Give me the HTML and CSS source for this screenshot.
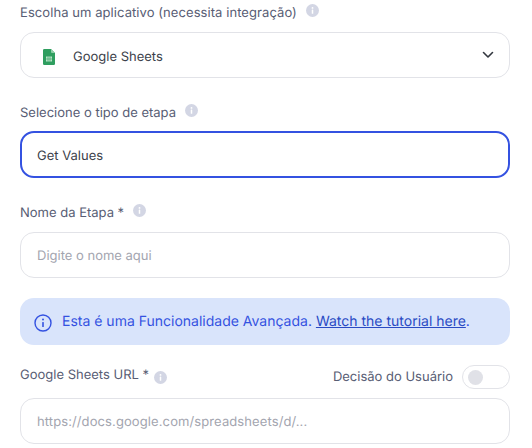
FILE: index.html
```html
<!DOCTYPE html>
<html lang="pt">
<head>
<meta charset="utf-8">
<title>Etapa</title>
<link rel="stylesheet" href="styles.css">
</head>
<body>
<main class="form">
  <section class="field field-app">
    <div class="label-row">
      <label class="label label-long">Escolha um aplicativo (necessita integração)</label>
      <svg class="hint hint-up" viewBox="0 0 14 14"><circle cx="7" cy="7" r="7" fill="#d3d6e4"/><rect x="6.2" y="6" width="1.6" height="4.6" rx=".5" fill="#fff"/><circle cx="7" cy="4.2" r="1" fill="#fff"/></svg>
    </div>
    <div class="box select">
      <svg class="sheets" viewBox="0 0 12 16"><path d="M1.2 0H8l4 4v10.8A1.2 1.2 0 0 1 10.800 16H1.200A1.200 1.200 0 0 1 0 14.800V1.200A1.200 1.200 0 0 1 1.200 0z" fill="#2f9e5f"/><path d="M8 0l4 4H9a1 1 0 0 1-1-1z" fill="#8fcfa8"/><path d="M3 7.500h6v5H3z" fill="#b9e2c8"/><path d="M5 7.500v5M7 7.500v5M3 10h6" stroke="#2f9e5f" stroke-width=".6"/></svg>
      <span class="value value-app">Google Sheets</span>
      <svg class="chevron" viewBox="0 0 12 8"><path d="M1.500 1.500L6 6l4.500-4.500" fill="none" stroke="#33373f" stroke-width="1.600" stroke-linecap="round" stroke-linejoin="round"/></svg>
    </div>
  </section>

  <section class="field field-type">
    <div class="label-row">
      <label class="label">Selecione o tipo de etapa</label>
      <svg class="hint hint-up" viewBox="0 0 14 14"><circle cx="7" cy="7" r="7" fill="#d3d6e4"/><rect x="6.2" y="6" width="1.6" height="4.6" rx=".5" fill="#fff"/><circle cx="7" cy="4.2" r="1" fill="#fff"/></svg>
    </div>
    <div class="box box-focus"><span class="value">Get Values</span></div>
  </section>

  <section class="field field-name">
    <div class="label-row">
      <label class="label">Nome da Etapa *</label>
      <svg class="hint hint-up" viewBox="0 0 14 14"><circle cx="7" cy="7" r="7" fill="#d3d6e4"/><rect x="6.2" y="6" width="1.6" height="4.6" rx=".5" fill="#fff"/><circle cx="7" cy="4.2" r="1" fill="#fff"/></svg>
    </div>
    <div class="box"><span class="placeholder">Digite o nome aqui</span></div>
  </section>

  <aside class="banner">
    <svg class="banner-icon" viewBox="0 0 18 18"><circle cx="9" cy="9" r="8" fill="none" stroke="#3452e1" stroke-width="1.400"/><rect x="8.200" y="8" width="1.600" height="5" rx=".6" fill="#3452e1"/><circle cx="9" cy="5.600" r="1" fill="#3452e1"/></svg>
    <p class="banner-text">Esta é uma Funcionalidade Avançada. <a class="banner-link" href="#">Watch the tutorial here</a>.</p>
  </aside>

  <section class="field field-url">
    <div class="label-row url-row">
      <label class="label">Google Sheets URL *</label>
      <svg class="hint hint-down" viewBox="0 0 14 14"><circle cx="7" cy="7" r="7" fill="#d3d6e4"/><rect x="6.2" y="6" width="1.6" height="4.6" rx=".5" fill="#fff"/><circle cx="7" cy="4.2" r="1" fill="#fff"/></svg>
      <span class="toggle-label">Decisão do Usuário</span>
      <span class="toggle"><span class="knob"></span></span>
    </div>
    <div class="box"><span class="placeholder placeholder-url">https://docs.google.com/spreadsheets/d/...</span></div>
  </section>
</main>
</body>
</html>
```
FILE: styles.css
```css
html, body {
  margin: 0;
  padding: 0;
  background: #fff;
}
body {
  font-family: Inter, "Liberation Sans", sans-serif;
  font-size: 13px;
  height: 448px;
  overflow: hidden;
  text-rendering: geometricPrecision;
}
.form {
  display: flex;
  flex-direction: column;
  padding: 0 22px 0 20px;
}
.field {
  display: flex;
  flex-direction: column;
}
.field-app { gap: 8px; }
.field-type { gap: 7px; margin-top: 22px; }
.field-name { gap: 8px; margin-top: 22px; }
.field-url { gap: 12px; margin-top: 17px; }
.label-row {
  display: flex;
  align-items: center;
  height: 24px;
}
.label {
  padding-top: 2px;
  color: #585d74;
  font-size: 13px;
  font-weight: 400;
  line-height: 22px;
}
.label-long { letter-spacing: .07px; }
.hint {
  width: 13px;
  height: 13px;
  margin-left: 9px;
  flex: none;
}
.hint-up { margin-bottom: 3px; }
.hint-down { margin-left: 5px; margin-top: 6px; }
.box {
  display: flex;
  align-items: center;
  box-sizing: border-box;
  height: 46px;
  padding: 0 16px;
  background: #fff;
  border: 1px solid #e2e3e8;
  border-radius: 14px;
}
.box-focus {
  height: 47px;
  border: 2px solid #3452e1;
  padding: 0 15px;
}
.select { padding: 0 15px 0 22px; }
.sheets {
  width: 12px;
  height: 16px;
  flex: none;
  margin-top: 4px;
  margin-right: 18px;
}
.value {
  margin-top: 2px;
  color: #3c3f4a;
  font-size: 13px;
}
.value-app { margin-top: 4px; }
.chevron {
  width: 12px;
  height: 8px;
  margin-left: auto;
  flex: none;
}
.placeholder {
  margin-top: 2px;
  color: #a3a5af;
  font-size: 13px;
}
.placeholder-url { letter-spacing: .1px; }
.banner {
  display: flex;
  align-items: center;
  box-sizing: border-box;
  height: 47px;
  margin-top: 20px;
  padding: 0 13px 0 14px;
  background: #d9e4fb;
  border-radius: 14px;
}
.banner-icon {
  width: 18px;
  height: 18px;
  margin-top: 2px;
  margin-right: 10px;
  flex: none;
}
.banner-text {
  margin: 0;
  color: #3452e1;
  font-size: 14px;
  white-space: nowrap;
}
.banner-link {
  color: #2a4bc4;
  text-decoration: underline;
}
.toggle-label {
  margin-left: auto;
  margin-top: 5px;
  color: #585d74;
  font-size: 13px;
}
.toggle {
  display: flex;
  align-items: center;
  box-sizing: border-box;
  width: 48px;
  height: 24px;
  margin-left: 9px;
  margin-top: 6px;
  padding: 0 5px;
  border: 1px solid #e2e3e8;
  border-radius: 12px;
  background: #fff;
}
.knob {
  width: 15px;
  height: 15px;
  border-radius: 50%;
  background: #e0e1e7;
}
```
